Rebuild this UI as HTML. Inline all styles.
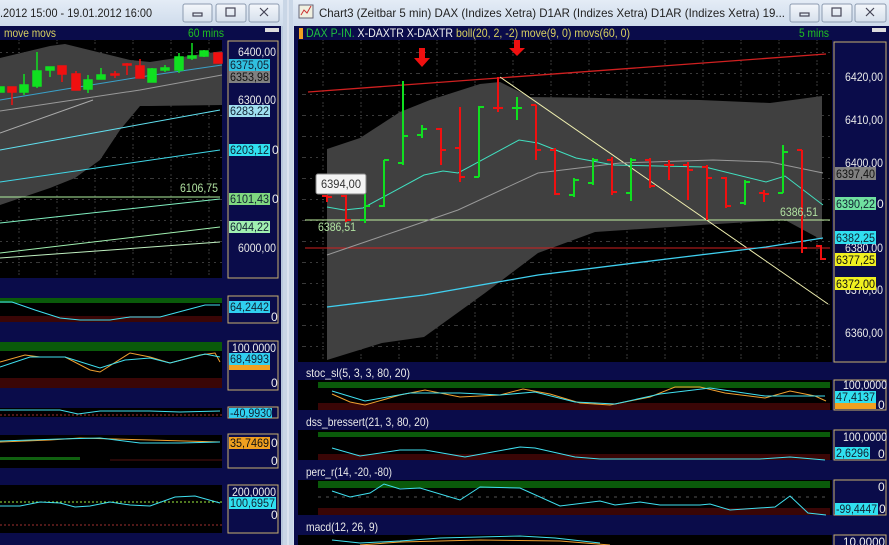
<!DOCTYPE html>
<html><head><meta charset="utf-8"><style>
html,body{margin:0;padding:0;width:889px;height:545px;overflow:hidden;background:#d4e0ee}
svg{display:block;font-family:"Liberation Sans",sans-serif}
</style></head><body>
<svg width="889" height="545" viewBox="0 0 889 545" xmlns="http://www.w3.org/2000/svg">
<defs>
<linearGradient id="tb" x1="0" y1="0" x2="0" y2="1"><stop offset="0" stop-color="#e4ecf6"/><stop offset="1" stop-color="#cfdcec"/></linearGradient>
<linearGradient id="bt" x1="0" y1="0" x2="0" y2="1"><stop offset="0" stop-color="#f4f7fb"/><stop offset="1" stop-color="#d6e0ec"/></linearGradient>
<pattern id="grid" width="38" height="21" patternUnits="userSpaceOnUse"><path d="M0 10.5 H38 M19 0 V21" stroke="#3a3a3a" stroke-width="1" stroke-dasharray="2,4"/></pattern>
</defs>
<rect x="0" y="0" width="889" height="545" fill="#d4e0ee"/>
<rect x="0" y="0" width="283" height="26" fill="url(#tb)"/>
<rect x="293" y="0" width="596" height="26" fill="url(#tb)"/>
<rect x="283" y="0" width="10" height="545" fill="#c9d6e6"/>
<line x1="288" y1="0" x2="288" y2="545" stroke="#eef3f9"/>
<text x="0" y="17" font-size="12" fill="#222" textLength="152" lengthAdjust="spacingAndGlyphs">.2012 15:00 - 19.01.2012 16:00</text>
<g stroke="#8c9bb0" fill="url(#bt)">
<rect x="183" y="4" width="29" height="18" rx="2"/><rect x="216" y="4" width="30" height="18" rx="2"/><rect x="249" y="4" width="30" height="18" rx="2"/>
<rect x="790" y="4" width="29" height="18" rx="2"/><rect x="822" y="4" width="30" height="18" rx="2"/><rect x="855" y="4" width="31" height="18" rx="2"/>
</g>
<g stroke="#445" fill="none" stroke-width="1.2">
<rect x="193" y="13" width="9" height="3"/><rect x="226" y="8" width="9" height="8"/><path d="M260 8 L268 16 M268 8 L260 16"/>
<rect x="800" y="13" width="9" height="3"/><rect x="832" y="8" width="9" height="8"/><path d="M866 8 L874 16 M874 8 L866 16"/>
</g>
<rect x="299" y="5" width="14" height="13" fill="#f0f0e0" stroke="#667"/><path d="M301 15 l3-5 3 3 4-7" stroke="#c33" fill="none"/>
<text x="319" y="17" font-size="12" fill="#222" textLength="466" lengthAdjust="spacingAndGlyphs">Chart3 (Zeitbar 5 min)  DAX (Indizes Xetra) D1AR (Indizes Xetra) D1AR (Indizes Xetra) 19...</text>

<!-- LEFT WINDOW chart -->
<rect x="0" y="26" width="281" height="519" fill="#0a0c4a"/>
<rect x="0" y="40" width="222" height="238" fill="#000"/>
<rect x="0" y="40" width="222" height="238" fill="url(#grid)"/>
<text x="4" y="37" font-size="12" fill="#d8d060" textLength="52" lengthAdjust="spacingAndGlyphs">move movs</text>
<text x="188" y="37" font-size="12" fill="#20c020" textLength="36" lengthAdjust="spacingAndGlyphs">60 mins</text>
<rect x="265" y="28" width="14" height="4" fill="#ddd"/>
<polygon points="0,58 50,46 65,44 130,60 150,62 222,51 222,105 150,106 140,106 120,130 100,160 75,178 50,188 0,205" fill="#404040"/>
<polyline points="0,111 60,102 140,90 222,75" fill="none" stroke="#999"/>
<polyline points="0,100 60,90 140,77 222,65" fill="none" stroke="#3aa0c8"/>
<polyline points="0,133 93,100" fill="none" stroke="#aaa"/>
<line x1="0" y1="150" x2="220" y2="110" stroke="#60e0f0"/>
<line x1="0" y1="182" x2="220" y2="150" stroke="#40d8e8"/>
<line x1="0" y1="197" x2="220" y2="197" stroke="#b0f0a0"/>
<line x1="0" y1="223" x2="220" y2="199" stroke="#80f0c0"/>
<line x1="0" y1="253" x2="220" y2="227" stroke="#a0f0b0"/>
<line x1="0" y1="258" x2="220" y2="242" stroke="#c0f0c0"/>
<g stroke-width="1.5">
<g fill="#10e020" stroke="#10e020">
<rect x="0" y="87" width="4" height="5"/><line x1="24" y1="74" x2="24" y2="95"/><rect x="20" y="85" width="8" height="7"/>
<line x1="37" y1="52" x2="37" y2="88"/><rect x="33" y="71" width="8" height="15"/>
<line x1="50" y1="67" x2="50" y2="77"/><rect x="46" y="67" width="8" height="3"/>
<line x1="88" y1="75" x2="88" y2="93"/><rect x="84" y="80" width="8" height="9"/>
<line x1="101" y1="68" x2="101" y2="79"/><rect x="97" y="75" width="8" height="4"/>
<line x1="152" y1="68" x2="152" y2="82"/><rect x="148" y="69" width="8" height="13"/>
<line x1="165" y1="65" x2="165" y2="72"/><rect x="161" y="68" width="8" height="2"/>
<line x1="179" y1="53" x2="179" y2="73"/><rect x="175" y="57" width="8" height="13"/>
<line x1="192" y1="43" x2="192" y2="60"/><rect x="188" y="56" width="8" height="2"/>
<line x1="204" y1="50" x2="204" y2="57"/><rect x="200" y="51" width="8" height="5"/>
</g>
<g fill="#f01010" stroke="#f01010">
<line x1="12" y1="87" x2="12" y2="105"/><rect x="8" y="87" width="8" height="5"/>
<line x1="62" y1="66" x2="62" y2="82"/><rect x="58" y="66" width="8" height="8"/>
<line x1="76" y1="71" x2="76" y2="90"/><rect x="72" y="74" width="8" height="16"/>
<line x1="115" y1="71" x2="115" y2="78"/><rect x="111" y="74" width="8" height="1"/>
<line x1="127" y1="63" x2="127" y2="75"/><rect x="123" y="64" width="8" height="1"/>
<line x1="140" y1="59" x2="140" y2="78"/><rect x="136" y="66" width="8" height="12"/>
<rect x="214" y="53" width="8" height="10"/>
</g></g>
<g font-size="12" lengthAdjust="spacingAndGlyphs">
<rect x="228" y="41" width="50" height="237" fill="#0a0c4a" stroke="#c8b070"/>
<text x="238" y="56" fill="#e8e8e8" textLength="38" lengthAdjust="spacingAndGlyphs">6400,00</text>
<text x="238" y="104" fill="#e8e8e8" textLength="38" lengthAdjust="spacingAndGlyphs">6300,00</text>
<text x="238" y="252" fill="#e8e8e8" textLength="38" lengthAdjust="spacingAndGlyphs">6000,00</text>
<rect x="229" y="59" width="41" height="12" fill="#30c0e0"/><text x="230" y="69" fill="#123" textLength="39" lengthAdjust="spacingAndGlyphs">6375,05</text>
<rect x="229" y="71" width="41" height="12" fill="#808080"/><text x="230" y="81" fill="#111" textLength="39" lengthAdjust="spacingAndGlyphs">6353,98</text>
<rect x="229" y="105" width="41" height="12" fill="#a0e0f0"/><text x="230" y="115" fill="#123" textLength="39" lengthAdjust="spacingAndGlyphs">6283,22</text>
<rect x="229" y="144" width="41" height="12" fill="#30e0f0"/><text x="230" y="154" fill="#123" textLength="39" lengthAdjust="spacingAndGlyphs">6203,12</text><text x="272" y="154" fill="#eee">0</text>
<text x="180" y="192" fill="#b0e0a0" textLength="38" lengthAdjust="spacingAndGlyphs">6106,75</text>
<rect x="229" y="193" width="41" height="12" fill="#80d880"/><text x="230" y="203" fill="#123" textLength="39" lengthAdjust="spacingAndGlyphs">6101,43</text><text x="272" y="203" fill="#eee">0</text>
<rect x="229" y="221" width="41" height="12" fill="#a0f0b0"/><text x="230" y="231" fill="#123" textLength="39" lengthAdjust="spacingAndGlyphs">6044,22</text>
</g>
<!-- left panels -->
<rect x="0" y="298" width="222" height="24" fill="#000"/><rect x="0" y="298" width="222" height="5" fill="#0a5a0a"/><rect x="0" y="316" width="222" height="6" fill="#3a0606"/>
<polyline points="0,302 12,302 35,310 60,318 80,320 110,320 130,317 160,317 175,313 205,305 220,305" fill="none" stroke="#40e0f0"/>
<rect x="228" y="296" width="50" height="27" fill="#0a0c4a" stroke="#c8b070"/>
<rect x="229" y="301" width="41" height="12" fill="#30d0f0"/><text x="230" y="311" font-size="12" fill="#123" textLength="39" lengthAdjust="spacingAndGlyphs">64,2442</text><text x="271" y="321" font-size="12" fill="#eee">0</text>
<rect x="0" y="342" width="222" height="46" fill="#000"/><rect x="0" y="342" width="222" height="9" fill="#0a5a0a"/><rect x="0" y="378" width="222" height="10" fill="#3a0606"/>
<polyline points="0,362 25,355 40,357 65,357 90,370 100,372 130,353 150,357 170,363 200,355 215,353 220,362" fill="none" stroke="#f0a030"/>
<polyline points="0,367 30,357 65,357 100,368 125,360 150,358 170,363 205,354 220,357" fill="none" stroke="#40e0f0"/>
<rect x="228" y="341" width="50" height="49" fill="#0a0c4a" stroke="#c8b070"/>
<text x="232" y="352" font-size="12" fill="#eee" textLength="44" lengthAdjust="spacingAndGlyphs">100,0000</text>
<rect x="229" y="353" width="41" height="12" fill="#30d0f0"/><rect x="229" y="365" width="41" height="5" fill="#f0a020"/><text x="230" y="363" font-size="12" fill="#123" textLength="39" lengthAdjust="spacingAndGlyphs">68,4993</text><text x="271" y="387" font-size="12" fill="#eee">0</text>
<rect x="0" y="408" width="222" height="9" fill="#000"/>
<polyline points="0,410 60,410 78,414 100,411 150,411 180,412 220,411" fill="none" stroke="#40e0f0"/>
<line x1="0" y1="415" x2="222" y2="415" stroke="#a03030" stroke-dasharray="2,2"/>
<rect x="228" y="407" width="50" height="11" fill="#0a0c4a" stroke="#c8b070"/>
<rect x="229" y="408" width="43" height="10" fill="#30d0f0"/><text x="230" y="417" font-size="12" fill="#123" textLength="42" lengthAdjust="spacingAndGlyphs">-40,9930</text>
<rect x="0" y="435" width="222" height="33" fill="#000"/>
<polyline points="0,442 50,440 80,438 150,440 220,442" fill="none" stroke="#f0a030"/>
<polyline points="0,441 60,439 100,438 140,443 180,443 220,442" fill="none" stroke="#40e0f0"/>
<rect x="0" y="457" width="80" height="3" fill="#106010"/>
<line x1="110" y1="460" x2="222" y2="460" stroke="#501010"/>
<rect x="228" y="434" width="50" height="34" fill="#0a0c4a" stroke="#c8b070"/>
<rect x="229" y="437" width="41" height="12" fill="#f0a020"/><text x="230" y="447" font-size="12" fill="#111" textLength="39" lengthAdjust="spacingAndGlyphs">35,7469</text><text x="271" y="447" font-size="12" fill="#eee">0</text><text x="271" y="465" font-size="12" fill="#eee">0</text>
<rect x="0" y="485" width="222" height="48" fill="#000"/>
<line x1="0" y1="502" x2="222" y2="502" stroke="#a0f040" stroke-dasharray="2,2"/>
<line x1="0" y1="525" x2="222" y2="525" stroke="#a03030" stroke-dasharray="2,2"/>
<polyline points="0,506 20,506 40,502 60,503 75,507 90,506 110,502 130,505 150,506 175,497 195,496 220,503" fill="none" stroke="#40e0f0"/>
<rect x="228" y="485" width="50" height="48" fill="#0a0c4a" stroke="#c8b070"/>
<text x="232" y="496" font-size="12" fill="#eee" textLength="44" lengthAdjust="spacingAndGlyphs">200,0000</text>
<rect x="229" y="497" width="47" height="12" fill="#30e0f0"/><text x="230" y="507" font-size="12" fill="#123" textLength="45" lengthAdjust="spacingAndGlyphs">100,6957</text><text x="271" y="519" font-size="12" fill="#eee">0</text>
<rect x="281" y="26" width="2" height="519" fill="#b8c8dc"/>

<!-- RIGHT WINDOW -->
<rect x="294" y="26" width="595" height="519" fill="#0a0c4a"/>
<rect x="299" y="28" width="4" height="11" fill="#f0a020"/>
<text x="306" y="37" font-size="12" textLength="324" lengthAdjust="spacingAndGlyphs"><tspan fill="#20c040">DAX P-IN. </tspan><tspan fill="#f0f0f0">X-DAXTR X-DAXTR </tspan><tspan fill="#d8d060">boll(20, 2, -2) move(9, 0) movs(60, 0)</tspan></text>
<text x="799" y="37" font-size="12" fill="#20c020" textLength="30" lengthAdjust="spacingAndGlyphs">5 mins</text>
<rect x="872" y="28" width="14" height="4" fill="#ddd"/>
<rect x="298" y="40" width="534" height="322" fill="#000"/>
<rect x="298" y="40" width="534" height="322" fill="url(#grid)"/>
<polygon points="327,149 360,138 400,112 430,100 480,84 500,82 530,97 600,98 700,100 770,103 800,99 822,96 822,240 785,220 700,225 595,232 538,253 485,293 424,337 382,343 327,360" fill="#404040"/>
<line x1="308" y1="92" x2="826" y2="54" stroke="#d02020" stroke-width="1.3"/>
<line x1="500" y1="77" x2="828" y2="304" stroke="#f0f0b0"/>
<line x1="305" y1="220" x2="830" y2="220" stroke="#c0f0a0"/>
<line x1="305" y1="248" x2="830" y2="248" stroke="#d02020"/>
<polyline points="327,255 400,230 458,210 538,173 620,163 713,160 770,162 823,173" fill="none" stroke="#999"/>
<polyline points="327,207 344,210 363,208 424,175 443,171 458,173 519,140 538,143 576,158 614,165 705,167 766,182 785,176 823,205" fill="none" stroke="#40e0c0"/>
<polyline points="327,307 424,295 538,275 675,258 766,247 823,238" fill="none" stroke="#40d0f0" stroke-width="1.3"/>
<g stroke-width="2" fill="none">
<path stroke="#f01010" d="M327 195V202M322 196H327M327 197H332 M346 195V222M341 196H346M346 220H351 M441 128V165M436 129H441M441 150H446 M460 107V182M455 148H460M460 177H465 M498 77V112M493 108H498M498 108H503 M536 105V160M531 105H536M536 150H541 M555 148V195M550 150H555M555 194H560 M612 157V195M607 160H612M612 192H617 M650 158V188M645 160H650M650 186H655 M669 160V180M664 165H669M669 165H674 M688 162V200M683 165H688M688 170H693 M707 165V220M702 167H707M707 178H712 M726 177V208M721 178H726M726 206H731 M764 190V202M759 193H764M764 194H769 M802 150V253M797 150H802M802 248H807 M821 245V260M816 246H821M821 259H826"/>
<path stroke="#10e020" d="M365 193V223M360 220H365M365 206H370 M384 160V207M379 206H384M384 160H389 M403 81V165M398 163H403M403 136H408 M422 125V138M417 135H422M422 129H427 M479 106V177M474 177H479M479 107H484 M517 97V120M512 108H517M517 108H522 M574 178V197M569 195H574M574 180H579 M593 158V185M588 183H593M593 160H598 M631 158V201M626 193H631M631 160H636 M745 180V205M740 203H745M745 182H750 M783 145V193M778 193H783M783 152H788"/>
</g>
<path d="M419 48h6v10h5l-8 9-8-9h5z" fill="#f01010"/>
<path d="M514 40h6v8h5l-8 8-8-8h5z" fill="#f01010"/>
<rect x="316" y="174" width="50" height="20" rx="2" fill="#f4f4f4" stroke="#888"/>
<text x="321" y="188" font-size="12" fill="#333" textLength="40" lengthAdjust="spacingAndGlyphs">6394,00</text>
<text x="318" y="231" font-size="12" fill="#b0e0a0" textLength="38" lengthAdjust="spacingAndGlyphs">6386,51</text>
<text x="780" y="216" font-size="12" fill="#b0e0a0" textLength="38" lengthAdjust="spacingAndGlyphs">6386,51</text>
<rect x="834" y="42" width="52" height="320" fill="#0a0c4a" stroke="#c8b070"/>
<g font-size="12" fill="#e8e8e8" lengthAdjust="spacingAndGlyphs">
<text x="845" y="81" textLength="38" lengthAdjust="spacingAndGlyphs">6420,00</text>
<text x="845" y="124" textLength="38" lengthAdjust="spacingAndGlyphs">6410,00</text>
<text x="845" y="167" textLength="38" lengthAdjust="spacingAndGlyphs">6400,00</text>
<text x="845" y="252" textLength="38" lengthAdjust="spacingAndGlyphs">6380,00</text>
<text x="845" y="294" textLength="38" lengthAdjust="spacingAndGlyphs">6370,00</text>
<text x="845" y="337" textLength="38" lengthAdjust="spacingAndGlyphs">6360,00</text>
</g>
<rect x="835" y="167" width="41" height="13" fill="#808080"/><text x="836" y="178" font-size="12" fill="#111" textLength="39" lengthAdjust="spacingAndGlyphs">6397,40</text>
<rect x="835" y="197" width="41" height="13" fill="#70e0a0"/><text x="836" y="208" font-size="12" fill="#123" textLength="39" lengthAdjust="spacingAndGlyphs">6390,22</text><text x="877" y="208" font-size="12" fill="#eee">0</text>
<rect x="835" y="231" width="41" height="13" fill="#30e0f0"/><text x="836" y="242" font-size="12" fill="#123" textLength="39" lengthAdjust="spacingAndGlyphs">6382,25</text>
<rect x="835" y="253" width="41" height="13" fill="#f0f020"/><text x="836" y="264" font-size="12" fill="#111" textLength="39" lengthAdjust="spacingAndGlyphs">6377,25</text>
<rect x="835" y="277" width="41" height="13" fill="#f0f020"/><text x="836" y="288" font-size="12" fill="#111" textLength="39" lengthAdjust="spacingAndGlyphs">6372,00</text>
<g font-size="12" fill="#e8e8e8">
<text x="306" y="377" textLength="104" lengthAdjust="spacingAndGlyphs">stoc_sl(5, 3, 3, 80, 20)</text>
<text x="306" y="426" textLength="123" lengthAdjust="spacingAndGlyphs">dss_bressert(21, 3, 80, 20)</text>
<text x="306" y="476" textLength="86" lengthAdjust="spacingAndGlyphs">perc_r(14, -20, -80)</text>
<text x="306" y="531" textLength="72" lengthAdjust="spacingAndGlyphs">macd(12, 26, 9)</text>
</g>
<rect x="298" y="380" width="534" height="30" fill="#000"/><rect x="318" y="382" width="512" height="6" fill="#0a5a0a"/><rect x="318" y="403" width="512" height="7" fill="#3a0606"/>
<polyline points="332,394 350,402 365,405 400,395 425,390 460,397 500,395 523,389 550,394 580,403 610,405 650,397 675,387 700,387 725,393 765,398 790,391 815,396 826,401" fill="none" stroke="#f0a030"/>
<polyline points="332,391 365,401 410,393 460,393 500,395 535,392 575,402 615,404 660,394 710,388 765,396 800,396 825,396" fill="none" stroke="#40e0f0"/>
<rect x="298" y="430" width="534" height="30" fill="#000"/><rect x="318" y="432" width="512" height="5" fill="#0a5a0a"/><rect x="318" y="454" width="512" height="6" fill="#3a0606"/>
<polyline points="332,448 360,456 400,450 425,450 465,457 520,447 535,448 575,457 600,459 640,459 700,459 760,459 790,457 825,460" fill="none" stroke="#40e0f0"/>
<rect x="298" y="480" width="534" height="35" fill="#000"/><rect x="318" y="481" width="512" height="7" fill="#0a5a0a"/><rect x="318" y="508" width="512" height="7" fill="#3a0606"/>
<line x1="318" y1="497" x2="830" y2="497" stroke="#555" stroke-dasharray="3,5"/>
<polyline points="332,491 350,497 370,493 384,484 400,489 420,488 460,500 480,487 520,488 560,506 600,501 615,505 640,502 660,505 700,505 710,504 730,510 775,507 790,496 808,513 826,515" fill="none" stroke="#40e0f0"/>
<rect x="298" y="535" width="534" height="10" fill="#000"/>
<polyline points="332,540 360,543 400,541 440,538 480,537 520,536 555,538 600,543" fill="none" stroke="#40e0f0"/>
<polyline points="360,545 400,542 480,540 560,541 610,545" fill="none" stroke="#f0a030"/>
<rect x="834" y="380" width="52" height="30" fill="#0a0c4a" stroke="#c8b070"/>
<text x="843" y="389" font-size="12" fill="#eee" textLength="44" lengthAdjust="spacingAndGlyphs">100,0000</text>
<rect x="835" y="391" width="41" height="12" fill="#30e0f0"/><rect x="835" y="403" width="41" height="6" fill="#f0a020"/><text x="836" y="401" font-size="12" fill="#123" textLength="39" lengthAdjust="spacingAndGlyphs">47,4137</text><text x="878" y="409" font-size="12" fill="#eee">0</text>
<rect x="834" y="430" width="52" height="30" fill="#0a0c4a" stroke="#c8b070"/>
<text x="843" y="441" font-size="12" fill="#eee" textLength="44" lengthAdjust="spacingAndGlyphs">100,0000</text>
<rect x="835" y="447" width="35" height="12" fill="#30e0f0"/><text x="836" y="457" font-size="12" fill="#123" textLength="33" lengthAdjust="spacingAndGlyphs">2,6296</text><text x="878" y="458" font-size="12" fill="#eee">0</text>
<rect x="834" y="480" width="52" height="35" fill="#0a0c4a" stroke="#c8b070"/>
<text x="878" y="491" font-size="12" fill="#eee">0</text>
<rect x="835" y="503" width="43" height="12" fill="#30e0f0"/><text x="836" y="513" font-size="12" fill="#123" textLength="41" lengthAdjust="spacingAndGlyphs">-99,4447</text><text x="879" y="513" font-size="12" fill="#eee">0</text>
<rect x="834" y="535" width="52" height="12" fill="#0a0c4a" stroke="#c8b070"/>
<text x="843" y="546" font-size="12" fill="#eee" textLength="42" lengthAdjust="spacingAndGlyphs">10,0000</text>
</svg>
</body></html>
